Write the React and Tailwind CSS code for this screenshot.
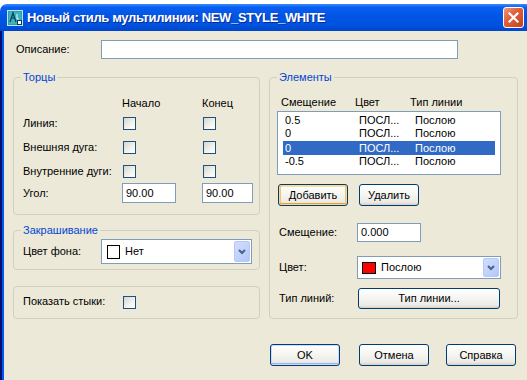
import React from "react";

function Check() {
  return (
    <span className="inline-block w-[13px] h-[13px] border border-[#1C5180] bg-[linear-gradient(135deg,#D6D5CE_0%,#F3F3EF_60%,#FFFFFF_100%)]" />
  );
}

function Btn({ children, className = "", ring = "" }) {
  return (
    <div
      className={
        "flex items-center justify-center border border-[#003C74] rounded-[3px] bg-[linear-gradient(to_bottom,#FFFFFF_0%,#F4F4F0_50%,#ECEBE6_85%,#D6D0C5_100%)] text-black " +
        ring +
        " " +
        className
      }
    >
      {children}
    </div>
  );
}

function Chevron() {
  return (
    <div className="ml-auto mr-[1px] my-[1px] self-stretch w-[16px] rounded-[2px] border border-[#B5C8F6] bg-[linear-gradient(135deg,#CFDDFE_0%,#C0D1FB_60%,#B2C6F6_100%)] flex items-center justify-center">
      <svg width="8" height="6" viewBox="0 0 8 6">
        <path d="M1 1 L4 4 L7 1" fill="none" stroke="#4D6185" strokeWidth="2" />
      </svg>
    </div>
  );
}

function Legend({ children }) {
  return (
    <span className="absolute -top-[7px] left-[7px] px-[2px] leading-[13px] bg-[#ECE9D8] text-[#0046D5]">
      {children}
    </span>
  );
}

const rows = [
  { o: "0.5", c: "ПОСЛ...", t: "Послою", sel: false, h: "h-[13px]" },
  { o: "0", c: "ПОСЛ...", t: "Послою", sel: false, h: "h-[13px]" },
  { o: "0", c: "ПОСЛ...", t: "Послою", sel: true, h: "h-[14px] mt-[1px]" },
  { o: "-0.5", c: "ПОСЛ...", t: "Послою", sel: false, h: "h-[13px]" },
];

export default function App() {
  return (
    <div className="w-[527px] h-[380px] overflow-hidden bg-white font-['Liberation_Sans',Arial,sans-serif] text-[11px] text-black leading-[13px]">
      <div className="h-[4px] bg-white" />
      <div className="flex flex-col h-[376px]">
        {/* Title bar */}
        <div className="h-[27px] flex items-center rounded-tl-[7px] pl-[7px] bg-[linear-gradient(to_bottom,#3A8CFF_0%,#0A5FF0_12%,#0055E5_45%,#0053E0_75%,#0046CC_100%)]">
          <svg width="16" height="16" viewBox="0 0 16 16" className="shrink-0">
            <rect x="0.5" y="0.5" width="15" height="15" fill="#2A9FB0" stroke="#BDE7EC" />
            <rect x="2" y="2" width="12" height="12" fill="#3FB4BE" />
            <path d="M3 12 L6 3 L9 12 M4.5 8 H7.5" fill="none" stroke="#0B3B52" strokeWidth="1.2" />
            <path d="M10 4 V9 H12" fill="none" stroke="#E6FAFF" strokeWidth="1" />
            <rect x="10.5" y="10.5" width="4" height="4" fill="#FFFFFF" stroke="#0B3B52" />
          </svg>
          <span className="ml-[4px] text-white font-bold text-[13px] leading-[16px] tracking-[-0.35px] whitespace-nowrap [text-shadow:1px_1px_0_#0A2B8F]">
            Новый стиль мультилинии: NEW_STYLE_WHITE
          </span>
          <div className="ml-auto mr-[3px] w-[21px] h-[21px] rounded-[3px] border border-white bg-[linear-gradient(135deg,#F0987A_0%,#E0603C_40%,#C8401D_100%)] flex items-center justify-center shrink-0">
            <svg width="11" height="11" viewBox="0 0 11 11">
              <path d="M1.5 1.5 L9.5 9.5 M9.5 1.5 L1.5 9.5" stroke="#FFFFFF" strokeWidth="2.2" strokeLinecap="square" />
            </svg>
          </div>
        </div>

        {/* Body */}
        <div className="flex-1 flex">
          <div className="w-[2px] bg-[#001070]" />
          <div className="w-[2px] bg-[#0058EE]" />
          <div className="flex-1 flex flex-col bg-[#ECE9D8]">
            {/* Description */}
            <div className="mt-[9px] h-[19px] flex items-center">
              <span className="pl-[12px] w-[97px]">Описание:</span>
              <div className="w-[357px] h-[19px] border border-[#7F9DB9] bg-white" />
            </div>

            {/* Groups */}
            <div className="mt-[18px] flex pl-[9px]">
              {/* Left column */}
              <div className="w-[247px] flex flex-col">
                <div className="relative h-[138px] border border-[#D0D0BF] rounded-[4px] pt-[17px] pl-[9px] flex flex-col">
                  <Legend>Торцы</Legend>
                  <div className="h-[16px] flex items-center">
                    <span className="w-[99px]" />
                    <span className="w-[80px]">Начало</span>
                    <span>Конец</span>
                  </div>
                  {["Линия:", "Внешняя дуга:", "Внутренние дуги:"].map((l) => (
                    <div key={l} className="h-[24px] flex items-center">
                      <span className="w-[99px] whitespace-nowrap">{l}</span>
                      <span className="w-[80px] flex pl-[1px]">
                        <Check />
                      </span>
                      <span className="flex pl-[1px]">
                        <Check />
                      </span>
                    </div>
                  ))}
                  <div className="h-[20px] flex items-center">
                    <span className="w-[99px]">Угол:</span>
                    <div className="w-[54px] h-[20px] border border-[#7F9DB9] bg-white pl-[3px] flex items-center">90.00</div>
                    <div className="ml-[26px] w-[51px] h-[20px] border border-[#7F9DB9] bg-white pl-[3px] flex items-center">90.00</div>
                  </div>
                </div>

                <div className="relative mt-[15px] h-[40px] border border-[#D0D0BF] rounded-[4px] pt-[8px] pl-[9px] flex">
                  <Legend>Закрашивание</Legend>
                  <div className="h-[25px] flex items-center">
                    <span className="w-[78px]">Цвет фона:</span>
                    <div className="w-[151px] h-[25px] border border-[#7F9DB9] bg-white flex items-center">
                      <span className="ml-[5px] w-[13px] h-[14px] border border-black bg-white" />
                      <span className="ml-[5px]">Нет</span>
                      <Chevron />
                    </div>
                  </div>
                </div>

                <div className="mt-[16px] h-[33px] border border-[#D0D0BF] rounded-[4px] pl-[9px] flex items-center">
                  <span className="w-[100px] whitespace-nowrap -mt-[3px]">Показать стыки:</span>
                  <Check />
                </div>
              </div>

              {/* Right column */}
              <div className="ml-[9px] w-[249px] relative h-[242px] border border-[#D0D0BF] rounded-[4px] pt-[17px] pl-[7px] flex flex-col">
                <Legend>Элементы</Legend>
                <div className="h-[14px] flex items-center pl-[4px]">
                  <span className="w-[74px]">Смещение</span>
                  <span className="w-[55px]">Цвет</span>
                  <span>Тип линии</span>
                </div>
                <div className="mt-[2px] w-[224px] h-[64px] border border-[#7F9DB9] bg-white pt-[2px] px-[5px] flex flex-col">
                  {rows.map((r, i) => (
                    <div
                      key={i}
                      className={
                        "flex items-center " +
                        r.h +
                        (r.sel ? " bg-[#316AC5] text-white" : "")
                      }
                    >
                      <span className="pl-[2px] w-[76px]">{r.o}</span>
                      <span className="w-[56px]">{r.c}</span>
                      <span>{r.t}</span>
                    </div>
                  ))}
                </div>
                <div className="mt-[9px] flex">
                  <Btn
                    className="ml-[1px] w-[70px] h-[22px]"
                    ring="shadow-[inset_0_0_0_1px_#FBD88F,inset_0_-2px_0_#E9A02A,inset_2px_0_0_#F8C46A,inset_-2px_0_0_#F8C46A,inset_0_2px_0_#FCDDA0]"
                  >
                    Добавить
                  </Btn>
                  <Btn className="ml-[11px] w-[60px] h-[22px]">Удалить</Btn>
                </div>
                <div className="mt-[17px] h-[19px] flex items-center">
                  <span className="pl-[2px] w-[80px]">Смещение:</span>
                  <div className="w-[64px] h-[19px] border border-[#7F9DB9] bg-white pl-[3px] flex items-center">0.000</div>
                </div>
                <div className="mt-[14px] h-[23px] flex items-center">
                  <span className="pl-[2px] w-[80px]">Цвет:</span>
                  <div className="w-[144px] h-[23px] border border-[#7F9DB9] bg-white flex items-center">
                    <span className="ml-[4px] w-[14px] h-[12px] border border-black bg-[#FF0000]" />
                    <span className="ml-[5px]">Послою</span>
                    <Chevron />
                  </div>
                </div>
                <div className="mt-[9px] h-[21px] flex items-center">
                  <span className="pl-[2px] w-[81px]">Тип линий:</span>
                  <Btn className="w-[142px] h-[21px]">Тип линии...</Btn>
                </div>
              </div>
            </div>

            {/* Bottom buttons */}
            <div className="mt-[25px] flex justify-end pr-[11px]">
              <Btn
                className="w-[70px] h-[22px]"
                ring="shadow-[inset_0_0_0_1px_#CEDAFB,inset_0_-1px_0_1px_#98B4EE]"
              >
                OK
              </Btn>
              <Btn className="ml-[19px] w-[70px] h-[22px]">Отмена</Btn>
              <Btn className="ml-[17px] w-[70px] h-[22px]">Справка</Btn>
            </div>
          </div>
        </div>
      </div>
    </div>
  );
}
